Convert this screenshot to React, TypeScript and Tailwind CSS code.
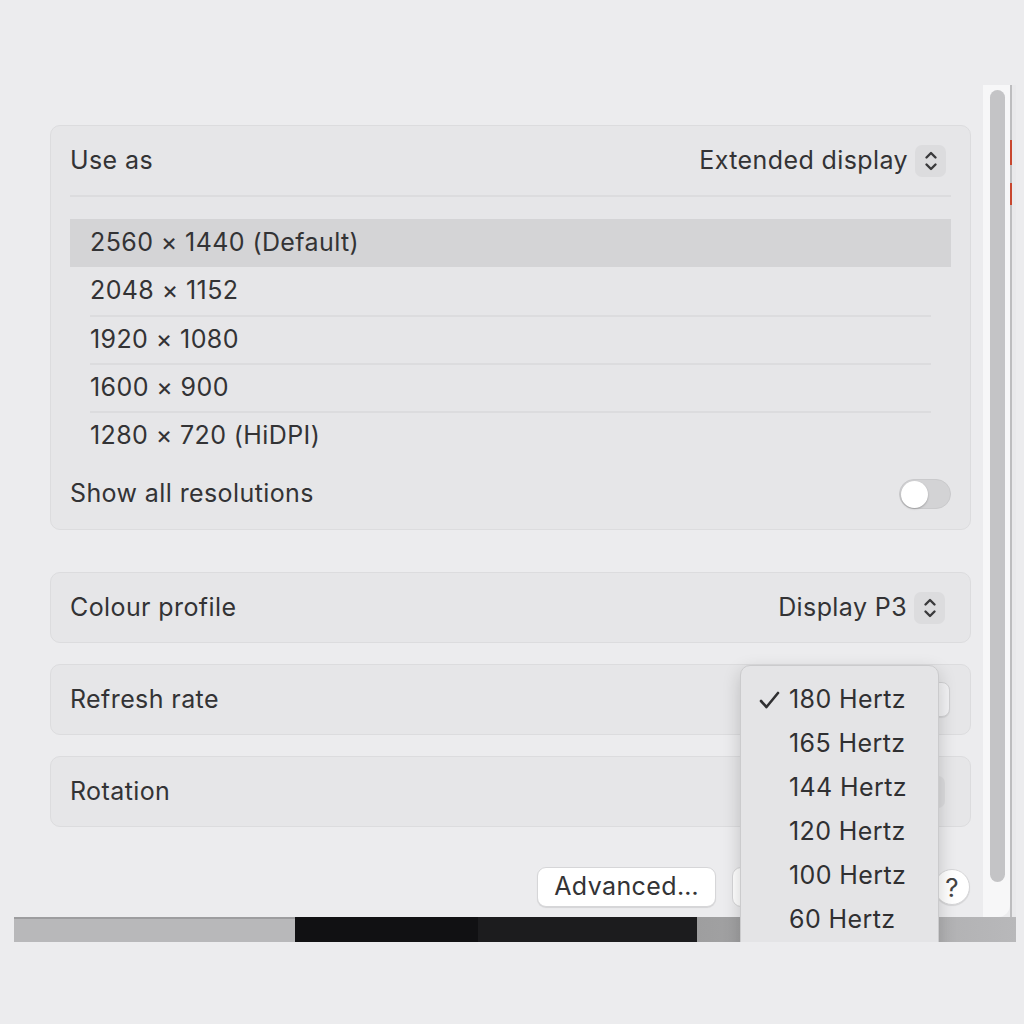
import React from "react";

const RES = [
  { label: "2560 × 1440 (Default)", selected: true },
  { label: "2048 × 1152" },
  { label: "1920 × 1080" },
  { label: "1600 × 900" },
  { label: "1280 × 720 (HiDPI)" },
];

const RATES = ["180 Hertz", "165 Hertz", "144 Hertz", "120 Hertz", "100 Hertz", "60 Hertz"];

function Stepper() {
  return (
    <div className="w-[31px] h-[32px] rounded-[7px] bg-[#dcdcde] flex items-center justify-center">
      <svg width="14" height="22" viewBox="0 0 14 22" fill="none" stroke="#3a3a3c" strokeWidth="2.4" strokeLinecap="round" strokeLinejoin="round">
        <path d="M2.5 7.5 L7 3 L11.5 7.5" />
        <path d="M2.5 14.5 L7 19 L11.5 14.5" />
      </svg>
    </div>
  );
}

function Card({ children, className = "" }: { children: React.ReactNode; className?: string }) {
  return (
    <div className={"rounded-[10px] bg-[#e6e6e8] border border-[#dcdcde] " + className}>{children}</div>
  );
}

function SimpleRow({ label, right }: { label: string; right?: React.ReactNode }) {
  return (
    <Card className="h-[71px] flex items-center justify-between pl-[19px] pr-[20px]">
      <span>{label}</span>
      {right}
    </Card>
  );
}

export default function App() {
  return (
    <div className="w-[1024px] h-[1024px] bg-[#ececee] overflow-hidden font-['Inter','Liberation_Sans',sans-serif] text-[25px] tracking-[0.4px] text-[#333335]">
      <div className="ml-[14px] w-[1002px] h-[942px] flex flex-col relative overflow-hidden">
        <div className="flex h-[917px]">
          {/* settings pane */}
          <div className="flex-1 flex flex-col pt-[125px] pl-[36px] pr-[12px]">
            <Card className="flex flex-col">
              <div className="h-[71px] mx-[19px] flex items-center justify-between border-b-2 border-[#dcdcde]">
                <span>Use as</span>
                <div className="flex items-center gap-[7px] mr-[5px]">
                  <span>Extended display</span>
                  <Stepper />
                </div>
              </div>
              <div className="mt-[22px] px-[19px] flex flex-col">
                {RES.map((r, i) => (
                  <div
                    key={r.label}
                    className={
                      "h-[48px] flex items-center px-[20px] " +
                      (r.selected ? "bg-[#d4d4d6]" : "")
                    }
                  >
                    <div
                      className={
                        "h-full flex-1 flex items-center " +
                        (i > 1 ? "border-t-2 border-[#dcdcde]" : "")
                      }
                    >
                      {r.label}
                    </div>
                  </div>
                ))}
              </div>
              <div className="h-[70px] pl-[19px] pr-[19px] flex items-center justify-between">
                <span>Show all resolutions</span>
                <div className="w-[52px] h-[30px] rounded-full bg-[#d3d3d5] border border-[#cacacc] flex items-center px-[1px]">
                  <div className="w-[27px] h-[27px] rounded-full bg-white shadow-[0_1px_2px_rgba(0,0,0,0.25)]" />
                </div>
              </div>
            </Card>

            <div className="mt-[42px] flex flex-col gap-[21px]">
              <SimpleRow
                label="Colour profile"
                right={
                  <div className="flex items-center gap-[7px] mr-[5px]">
                    <span>Display P3</span>
                    <Stepper />
                  </div>
                }
              />
              <SimpleRow
                label="Refresh rate"
                right={
                  <div className="h-[35px] w-[190px] rounded-[8px] bg-[#f2f2f4] border border-[#d2d2d4] shadow-[0_1px_1px_rgba(0,0,0,0.08)]" />
                }
              />
              <SimpleRow
                label="Rotation"
                right={
                  <div className="mr-[5px]">
                    <Stepper />
                  </div>
                }
              />
            </div>

            <div className="mt-[40px] flex items-center justify-end pr-[1px] gap-[16px]">
              <button className="h-[40px] px-[16px] rounded-[9px] bg-white border border-[#d6d6d8] shadow-[0_1px_1px_rgba(0,0,0,0.1)]">
                Advanced…
              </button>
              <div className="h-[40px] w-[186px] rounded-[9px] bg-white border border-[#d6d6d8]" />
              <button className="w-[36px] h-[36px] rounded-full bg-white border border-[#d6d6d8] shadow-[0_1px_1px_rgba(0,0,0,0.1)] flex items-center justify-center text-[26px] text-[#444]">
                ?
              </button>
            </div>
          </div>

          {/* scrollbar */}
          <div className="w-[27px] mt-[85px] bg-[#f7f7f8] rounded-br-[12px] flex justify-center pt-[5px] pb-[35px] pl-[2px]">
            <div className="w-[15px] h-full rounded-full bg-[#c4c4c6]" />
          </div>

          {/* window behind */}
          <div className="w-[6px] mt-[85px] flex">
            <div className="w-[2px] bg-[#bdbdbf] flex flex-col">
              <div className="h-[55px]" />
              <div className="h-[25px] bg-[#c8472f]" />
              <div className="h-[18px]" />
              <div className="h-[22px] bg-[#c8472f]" />
            </div>
            <div className="flex-1 bg-[#e9e9eb]" />
          </div>
        </div>

        {/* desktop strip */}
        <div className="flex h-[25px]">
          <div className="w-[281px] bg-[#b8b8ba] border-t-2 border-[#9d9d9f]" />
          <div className="w-[183px] bg-[#111113]" />
          <div className="w-[219px] bg-[#1c1c1e]" />
          <div className="flex-1 bg-gradient-to-r from-[#9e9e9f] to-[#b8b8ba]" />
        </div>

        {/* refresh rate menu */}
        <div className="absolute left-[726px] top-[665px] w-[199px] h-[300px] rounded-[10px] bg-[#e4e4e6] border border-[#cbcbcd] shadow-[0_6px_18px_rgba(0,0,0,0.18)] pt-[12px] text-[#303032]">
          {RATES.map((r, i) => (
            <div key={r} className="h-[44px] flex items-center">
              <div className="w-[48px] flex justify-end pr-[9px]">
                {i === 0 && (
                  <svg width="21" height="18" viewBox="0 0 21 18" fill="none" stroke="#303032" strokeWidth="2.6" strokeLinecap="round" strokeLinejoin="round">
                    <path d="M2 10 L7.5 16 L19 2" />
                  </svg>
                )}
              </div>
              <span>{r}</span>
            </div>
          ))}
        </div>
      </div>
    </div>
  );
}
